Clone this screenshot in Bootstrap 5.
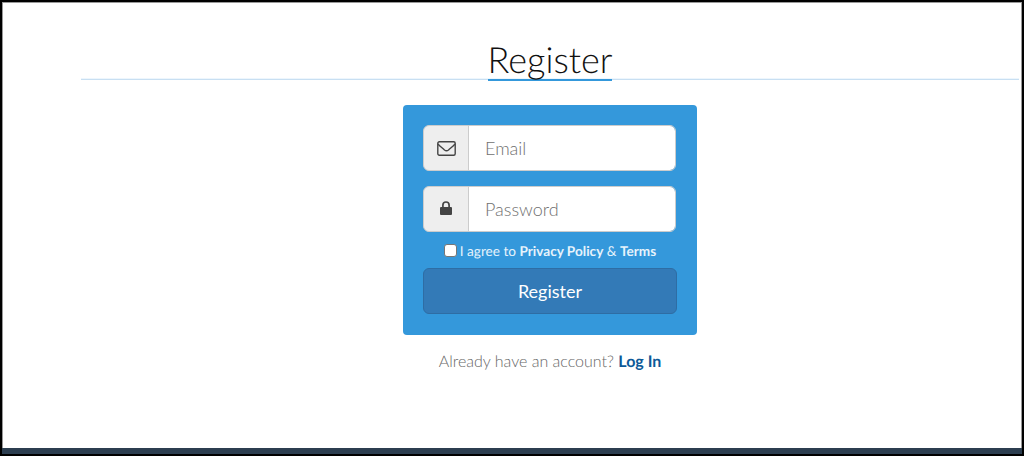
<!DOCTYPE html>
<html lang="en">
    <head>
        <meta charset="UTF-8">
        <meta name="viewport" content="width=device-width, initial-scale=1.0">
        <title>Register</title>
        <link rel="stylesheet"
            href="https://cdn.jsdelivr.net/npm/bootstrap@5.3.0/dist/css/bootstrap.min.css">
        <style>
            body {
                font-family: Lato, "Liberation Sans", sans-serif;
                font-weight: 300;
                color: #666;
                text-rendering: geometricPrecision;
            }
            .page-frame {
                height: 456px;
                border: 2px solid #000;
                box-shadow: inset 1px 1px #999, inset -1px 0 #999;
            }
            .page-main {
                padding: 37px 3px 0 79px;
            }
            .page-title {
                height: 41px;
                margin-bottom: 25px;
                border-bottom: 1px solid #c8dff2;
                box-shadow: inset 0 -1px #edf6fd;
            }
            .page-title h1 {
                height: 42px;
                margin: 0;
                font-size: 36px;
                font-weight: 300;
                line-height: 40px;
                color: #111;
                border-bottom: 2px solid #3498db;
            }
            .register-box {
                width: 294px;
                height: 230px;
                padding: 20px;
                background: #3498db;
                border-radius: 4px;
            }
            .register-box .input-group {
                width: 253px;
                height: 46px;
                margin-bottom: 15px;
            }
            .register-box .input-group-text {
                width: 46px;
                padding: 0;
                background: #eee;
                border-color: #ccc;
                border-radius: 6px;
                color: #444;
            }
            .register-box .form-control {
                padding: 0 16px;
                font-size: 18px;
                font-weight: 300;
                border-color: #ccc;
                border-radius: 6px;
            }
            .register-box .form-control::placeholder {
                color: #707070;
            }
            .agree {
                height: 22px;
                font-size: 13.6px;
                font-weight: 400;
                line-height: 22px;
                color: #e6f3fb;
                margin-top: -7px;
                margin-bottom: 1px;
            }
            .agree a {
                color: #e6f3fb;
            }
            .agree input {
                appearance: none;
                width: 13px;
                height: 13px;
                margin: 0 3px 2px 0;
                background: #fff;
                border: 1px solid #767676;
                border-radius: 3px;
            }
            .btn-register {
                width: 254px;
                height: 46px;
                margin-top: 5px;
                padding: 0;
                font-size: 18px;
                color: #fff;
                background: #337ab7;
                border: 1px solid #2e6da4;
                border-radius: 6px;
            }
            .login-line {
                margin-top: 15px;
                font-size: 16px;
            }
            .login-line a {
                color: #0d5a98;
            }
            .page-footer {
                height: 6px;
                background: #2c3e50;
            }
        </style>
    </head>
    <body>
        <div class="page-frame d-flex flex-column overflow-hidden">
            <main class="page-main flex-grow-1">
                <div class="page-title d-flex justify-content-center">
                    <h1>Register</h1>
                </div>
                <form class="register-box mx-auto">
                    <div class="input-group">
                        <span class="input-group-text justify-content-center">
                            <svg width="19" height="15" viewBox="0 0 19 15" fill="none" stroke="currentColor" stroke-width="1.4">
                                <rect x=".8" y=".8" width="17.4" height="13.4" rx="1.5"/>
                                <path d="M1 3C3 5.500 5.500 7 7.500 9Q9.500 10.500 11.500 9C13.500 7 16 5.500 18 3"/>
                            </svg>
                        </span>
                        <input type="email" class="form-control" placeholder="Email">
                    </div>
                    <div class="input-group">
                        <span class="input-group-text justify-content-center">
                            <svg width="12" height="16" viewBox="0 0 12 16">
                                <path d="M2.900 6V4.100a3.100 3.100 0 0 1 6.200 0V6" fill="none" stroke="currentColor" stroke-width="1.700"/>
                                <rect y="6" width="12" height="8" rx="1" fill="currentColor"/>
                            </svg>
                        </span>
                        <input type="password" class="form-control" placeholder="Password">
                    </div>
                    <div class="agree d-flex align-items-center justify-content-center">
                        <input type="checkbox" id="agree">
                        <label for="agree">I agree to <a href="#" class="fw-bold text-decoration-none">Privacy Policy</a> &amp; <a href="#" class="fw-bold text-decoration-none">Terms</a></label>
                    </div>
                    <button type="submit" class="btn btn-register">Register</button>
                </form>
                <p class="login-line text-center mb-0">Already have an account? <a href="#" class="fw-bold text-decoration-none">Log In</a></p>
            </main>
            <footer class="page-footer"></footer>
        </div>
        <script src="https://cdn.jsdelivr.net/npm/bootstrap@5.3.0/dist/js/bootstrap.bundle.min.js"></script>
    </body>
</html>
